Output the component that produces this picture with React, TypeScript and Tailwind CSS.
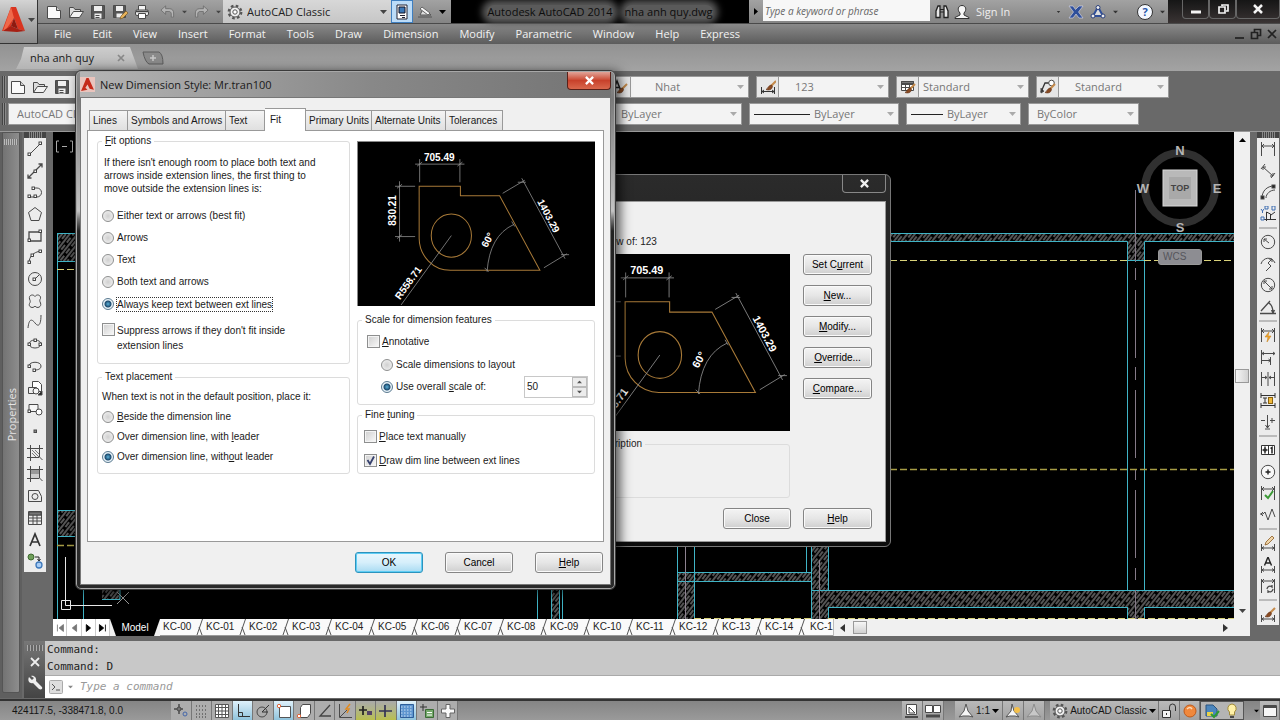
import React from "react";
import clsx from "clsx";

type Children = { children?: React.ReactNode };

const UI_FONT = "font-['Liberation_Sans',sans-serif] text-[10px]";

function Icon({ children, size = "h-4 w-4" }: Children & { size?: string }) {
  return (
    <svg viewBox="0 0 16 16" className={clsx("shrink-0", size)} fill="none" stroke="#4a4a4a" strokeWidth="1">
      {children}
    </svg>
  );
}

function Caret({ className = "text-[#444]" }: { className?: string }) {
  return (
    <svg viewBox="0 0 7 4" className={clsx("h-1 w-[7px] shrink-0", className)} fill="currentColor">
      <path d="M0 0h7L3.5 4z" />
    </svg>
  );
}

/* ---------- icon drawings ---------- */

const NewIcon = () => (
  <Icon>
    <path d="M1.5 2.5h9l4 4v8h-13z" fill="#fafafa" />
    <path d="M10.5 2.5v4h4" fill="#ccc" />
  </Icon>
);
const OpenIcon = () => (
  <Icon>
    <path d="M1.5 13.5v-10h4l1.5 2h5.5v2.5" fill="#ddd" />
    <path d="M1.5 13.5l4-6h10l-4 6z" fill="#f2f2f2" />
  </Icon>
);
const SaveIcon = () => (
  <Icon>
    <path d="M1.5 1.5h13v13h-13z" fill="#555" />
    <path d="M4 2h8v5H4zM4.5 9.5h7v5h-7z" fill="#eee" stroke="none" />
    <path d="M5.5 11.5h4M5.5 13.5h4" />
  </Icon>
);
const SaveAsIcon = () => (
  <Icon>
    <path d="M1.5 1.5h12v12h-12z" fill="#555" />
    <path d="M4 2h7v5H4zM4.5 9.5h6v4h-6z" fill="#eee" stroke="none" />
    <path d="M8 15l1-3 5-5 2 2-5 5z" fill="#e6b25a" stroke="#6b4d1d" strokeWidth=".6" />
  </Icon>
);
const PrintIcon = () => (
  <Icon>
    <path d="M4.5 6V1.5h7V6" fill="#f4f4f4" />
    <rect x="1.5" y="6" width="13" height="5.5" rx="1.5" fill="#eee" />
    <path d="M4.5 9.5h7v5h-7z" fill="#fff" />
    <path d="M2 7.500h12" stroke="#444" strokeWidth="1.5" />
  </Icon>
);
const UndoIcon = ({ flip }: { flip?: boolean }) => (
  <svg viewBox="0 0 16 16" className={clsx("h-[15px] w-[15px]", flip && "-scale-x-100")} fill="#b4b4b4" stroke="#6c6c6c" strokeWidth=".9">
    <path d="M1 6.500l5-4.500v3h4c3 0 4.500 2 4.500 4.500V14h-2.500v-3.500c0-1.500-1-2.500-2.500-2.500H6v3z" />
  </svg>
);
const GearIcon = () => (
  <Icon>
    <circle cx="8" cy="8" r="6.300" fill="none" stroke="#555" strokeWidth="2.200" strokeDasharray="2.600 2.350" />
    <circle cx="8" cy="8" r="5" fill="#f2f2f2" stroke="#555" />
    <circle cx="8" cy="8" r="2.200" fill="#fff" stroke="#555" />
  </Icon>
);
const PlotIcon = () => (
  <Icon>
    <path d="M3 1h10v14H3z" fill="#fff" stroke="#223" />
    <path d="M5 3h6v6H5z" fill="#3b78b8" stroke="#112" />
    <path d="M6 11.500h5M8 13.500h3" stroke="#223" />
  </Icon>
);
const SketchIcon = () => (
  <Icon>
    <path d="M1 13h14M3 11l3-6 8 6z" fill="#ddd" stroke="#555" />
    <path d="M5 3l8 6-2 2-8-6z" fill="#f4f4f4" stroke="#666" />
  </Icon>
);
const BrushTail = () => (
  <>
    <path d="M15 5l-5 5" stroke="#c48a4a" strokeWidth="2" />
    <path d="M10.500 9c-3 0-3 3-5.500 4.500 2.500 1 6 .5 6.500-3z" fill="#8a4a22" stroke="#5a2d12" strokeWidth=".6" />
  </>
);
const TextStyleIcon = () => (
  <Icon>
    <path d="M1 12L5 2l4 10M2.500 8.500h5" stroke="#222" strokeWidth="1.500" />
    <BrushTail />
  </Icon>
);
const DimStyleIcon = () => (
  <Icon>
    <path d="M1.500 8v7M14.500 8v7M2 12.500h12M4 11l-2 1.500L4 14M12 11l2 1.500-2 1.500" stroke="#333" />
    <g transform="translate(1 -3)">
      <BrushTail />
    </g>
  </Icon>
);
const TableStyleIcon = () => (
  <Icon>
    <path d="M1.500 2.500h12v9h-12zM1.500 5.500h12M5.500 2.500v9M9.500 2.500v9M1.500 8.500h12" fill="#fff" />
    <path d="M1.500 2.500h12v2h-12z" fill="#777" />
    <BrushTail />
  </Icon>
);
const LeaderStyleIcon = () => (
  <Icon>
    <path d="M1 13l4-9h4" stroke="#333" strokeWidth="1.300" />
    <path d="M1 9v5l3-2" fill="#333" />
    <circle cx="11.500" cy="4" r="2.800" fill="#fff" />
    <BrushTail />
  </Icon>
);

const Node = ({ x, y }: { x: number; y: number }) => (
  <rect x={x - 1} y={y - 1} width="2.500" height="2.500" fill="#fff" stroke="#333" strokeWidth=".9" />
);

const drawTools: [string, React.ReactNode][] = [
  ["Line", <><path d="M2 14L14 2" /><Node x={2} y={13} /><Node x={13} y={2} /></>],
  ["Construction line", <><path d="M1 15L15 1M1 11.500V15h3.500M11.500 1H15v3.500" strokeWidth="1.300" /><Node x={8} y={8} /></>],
  ["Polyline", <><path d="M2 13h8a4 4 0 0 0 0-9H7" /><Node x={2} y={12} /><Node x={8} y={12} /><Node x={6} y={4} /></>],
  ["Polygon", <path d="M8 1.500l6.500 5-2.500 8H4l-2.500-8z" />],
  ["Rectangle", <><path d="M2 4h12v9H2z" strokeWidth="1.300" /><Node x={2} y={12} /><Node x={13} y={3} /></>],
  ["Arc", <><path d="M2 14C2 8 6 3 14 2" /><Node x={2} y={13} /><Node x={5} y={6} /><Node x={13} y={2} /></>],
  ["Circle", <><circle cx="8" cy="8" r="6.500" /><path d="M8 8l4-4" /><Node x={7} y={8} /></>],
  ["Revision cloud", <path d="M8 3.500C9.500 1 14 1.500 13.500 5.500 12.500 7 12.500 8 13.500 10 15 14 10 16 8 13 6 16 1 14 2.500 10.500 3.500 9 3.500 8 2.500 6 1.500 1.500 6.500 1 8 3.500z" />],
  ["Spline", <path d="M1 14C2 4 5 5 8 9s6 3 6-8" />],
  ["Ellipse", <><ellipse cx="8" cy="8" rx="6" ry="4" /><Node x={2} y={8} /><Node x={13} y={8} /><Node x={8} y={4} /></>],
  ["Ellipse arc", <><path d="M2 8c0-5 12-5 12 0 0 3-3 4-6 4" /><Node x={7} y={12} /><Node x={2} y={8} /></>],
  ["Insert block", <><path d="M5.500 1.500h6l3 3v7h-9z" fill="#fff" /><path d="M1.500 7.500h8v6h-8z" fill="#eee" /><circle cx="9" cy="11" r="3" fill="#f6f6f6" /><path d="M15 11v4h-4z" fill="#222" /></>],
  ["Make block", <><path d="M2 3.500h9v7H2z" fill="#f6f6f6" /><circle cx="12" cy="11" r="3" fill="#fff" /><Node x={2} y={10} /></>],
  ["Point", <rect x="7" y="7" width="2.500" height="2.500" fill="#888" />],
  ["Hatch", <><path d="M3.500 0v16M12.500 0v12l3 3M0 3.500h16M0 12.500h12" /><path d="M5 5l7 7M8 5l4 4M5 8l4 4" strokeWidth=".7" /></>],
  ["Gradient", <><path d="M4 4h8v4H4z" fill="#999" stroke="none" /><path d="M4 8h8v4H4z" fill="#ccc" stroke="none" /><path d="M3.500 0v16M12.500 0v12l3 3M0 3.500h16M0 12.500h12" /></>],
  ["Region", <><path d="M1.500 2.500h10l3 6v5h-13z" /><circle cx="8" cy="8.500" r="3" /></>],
  ["Table", <><path d="M1.500 1.500h13v13h-13zM1.500 5h13M1.500 8h13M1.500 11h13M6 5v10M10 5v10" /><path d="M2 2h12v3H2z" fill="#777" /></>],
  ["Multiline text", <path d="M3 14L8 2l5 12M4.500 10h7" stroke="#333" strokeWidth="1.700" />],
  ["Add selected", <><circle cx="4" cy="4" r="3" fill="#6f9f5a" stroke="#3e6a30" /><circle cx="12" cy="12" r="3" fill="#a9cdf5" stroke="#3d78bb" strokeWidth="1.300" /><path d="M8 4h4v3M10.500 6l1.500 2 1.500-2" stroke="#222" /></>],
];

const DimBase = ({ y = 5 }: { y?: number }) => (
  <path d={`M1.500 1v14M14.500 1v14M2 ${y}h12M4 ${y - 2}l-2 2 2 2M12 ${y - 2}l2 2-2 2`} />
);
const DimFoot = () => <path d="M1.500 9v7M14.500 9v7M2 13h12M4 11.500L2 13l2 1.500M12 11.500l2 1.500-2 1.500" />;

const dimTools: ([string, React.ReactNode] | null)[] = [
  ["Linear", <DimBase />],
  ["Aligned", <path d="M3 4l10 9M1 6l4-5M11 15l4-5M3 7V4h3M10 13h3v-3" />],
  ["Arc length", <><path d="M2 14C2 7 7 2 14 2M6 14c0-4 4-8 9-8" /><rect x="1" y="12" width="3" height="3" fill="#222" /><rect x="12" y="1" width="3" height="3" fill="#222" /></>],
  ["Ordinate", <><path d="M6.500 6v9M4 13.500h12M6.500 6l4 2v5M11 9l4-3" stroke="#333" /><path d="M1 3l1.500 2L4 3M2.500 5v2M1 11h3v3H1zM5 0h3v3H5zM12 0h3v4h-3z" stroke="#3c6cb0" /></>],
  null,
  ["Radius", <><circle cx="8" cy="8" r="6.700" fill="#ededed" /><path d="M9 9L4 5M4 8V5h3" /></>],
  ["Jogged", <path d="M1 8C3 1 12 0 15 7M12 3L8 7l3 3-5 5M9 3h3v3" />],
  ["Diameter", <><circle cx="8" cy="8" r="6.700" fill="#ededed" /><path d="M4 4l8 8M4 7V4h3M9 12h3V9" /></>],
  ["Angular", <path d="M0 14.500h16M1 12L10 2M9 4c3 2 4 5 4 10M11.500 11l1.500 3 1.500-3" strokeWidth="1.300" />],
  null,
  ["Quick dimension", <><DimBase y={4} /><path d="M9 5L5 10h3l-1 5 4-6H8z" fill="#f0a830" stroke="#c47a10" strokeWidth=".5" /></>],
  ["Baseline", <path d="M1.500 1v14M2 4.500h13M13 3l2 1.500L13 6M2 11.500h8M8.500 10l2 1.500-2 1.500M10.500 8v8M4 3L2 4.500 4 6" />],
  ["Continue", <path d="M1.500 1v14M8 1v14M14.500 1v14M2 6.500h5M9 6.500h5M5 5l2 1.500L5 8M11 5L9 6.500 11 8" />],
  ["Dimension space", <><path d="M1 1v5M15 1v5M1 3.500h14M1 11v5M15 11v5M1 13.500h14M5 6v5M3 6h4M3 11h4" stroke="#333" /><rect x="8.500" y="5.500" width="4" height="6" fill="#f0b93a" stroke="#8a6210" /></>],
  ["Dimension break", <path d="M7.500 1v13M5 15h5M5.500 11l2 3 2-3M1 6.500h4M10 6.500h5M12 4v5" />],
  null,
  ["Tolerance", <><path d="M1.500 3.500h13v9h-13zM8.500 3.500v9" fill="#fff" stroke="#333" /><path d="M5 4.500v7M2.500 8h5" stroke="#222" strokeWidth="1.400" /><circle cx="5" cy="8" r="1.500" fill="#222" /><path d="M10.500 6.500l1.500-1v6" stroke="#222" strokeWidth="1.500" /></>],
  ["Center mark", <><circle cx="8" cy="8" r="6.700" fill="#f8f8f8" /><path d="M8 5.500v5M5.500 8h5" stroke="#222" strokeWidth="1.400" /></>],
  ["Inspection", <><DimBase y={4} /><path d="M5 10l3 3 5-7" stroke="#3c9a36" strokeWidth="2" /></>],
  ["Jogged linear", <path d="M0 7h3l2-2 3 8 4-11 3 8M3 5L1 7l2 2" />],
  null,
  ["Dimension edit", <><DimFoot /><path d="M5 10l1-3 6-6 2 2-6 6z" fill="#f0d5a8" stroke="#8a5a22" strokeWidth=".8" /></>],
  ["Dimension text edit", <><DimFoot /><path d="M4.500 8.500L8 0l3.500 8.500M5.500 6h5" stroke="#222" strokeWidth="1.400" /></>],
  ["Dimension update", <><DimBase y={3} /><path d="M7 11a3 3 0 0 1 5-2v-2M13 11a3 3 0 0 1-5 2v2" strokeWidth="1.300" /></>],
  null,
  ["Dimension style", <><DimFoot /><g transform="translate(0 -3)"><BrushTail /></g></>],
];

const statusTools: [string, React.ReactNode, string?][] = [
  ["Infer constraints", <><path d="M1 6h9M6 1v10" strokeWidth="1.500" /><circle cx="6" cy="6" r="2" fill="#777" /><circle cx="12" cy="11" r="2" stroke="#46a" /></>],
  ["Snap mode", <path d="M2 3h12M2 7h12M2 11h12M2 14h12" strokeDasharray="1 2" stroke="#333" />],
  ["Grid display", <path d="M1.500 1.500h13v13h-13zM4.500 1v14M8 1v14M11.500 1v14M1 4.500h14M1 8h14M1 11.500h14" fill="#fff" stroke="#555" />],
  ["Ortho mode", <path d="M3.500 1v12.500H15M3.500 9.500h4v4" stroke="#333" />, "on"],
  ["Polar tracking", <><circle cx="7" cy="9" r="5" /><path d="M7 9l7-7M7 9h6" stroke="#333" /></>],
  ["Object snap", <><path d="M3.500 3.500h11v11h-11z" fill="#fff" stroke="#555" /><circle cx="3" cy="3" r="1.700" stroke="#e0663a" fill="#fff" /></>, "on"],
  ["3D object snap", <><path d="M4.500 4.500l2-3h8v9l-3 4h-7z" fill="#fff" /><circle cx="3" cy="13" r="1.700" stroke="#e0663a" fill="#fff" /></>],
  ["Object snap tracking", <path d="M13 2L3 13h11" stroke="#444" strokeWidth="1.300" />],
  ["Dynamic UCS", <><path d="M2.500 1v13.500H15M3 14L10 7" /><path d="M13 1l-4 5h3l-2 4" stroke="#e08a20" strokeWidth="1.500" /></>],
  ["Dynamic input", <><path d="M1 7h8M5 3v9" stroke="#222" strokeWidth="1.700" /><rect x="9" y="8" width="5" height="4" fill="#546" stroke="none" /></>, "lime"],
  ["Lineweight", <path d="M1 8h13M7 2v12" stroke="#335" strokeWidth="1.700" />, "lime"],
  ["Transparency", <><path d="M1.500 1.500h13v13h-13z" fill="#5d95cf" stroke="#2d5d99" /><path d="M2 4h12M2 7h12M2 10h12M2 13h12" stroke="#cfe2f5" strokeDasharray="1.500 1.500" /></>, "on"],
  ["Quick properties", <><path d="M1 4h7M4 1v7" stroke="#333" /><path d="M6.500 6.500h8v8h-8z" fill="#74a86a" stroke="#3b6b35" /><path d="M8 9.500h5M8 12h5" stroke="#fff" /></>],
  ["Selection cycling", <path d="M6 1.500h4V6h4.500v4H10v4.500H6V10H1.500V6H6z" fill="#fafafa" stroke="#666" />],
];

const layoutTabs = [
  "KC-00", "KC-01", "KC-02", "KC-03", "KC-04", "KC-05", "KC-06", "KC-07",
  "KC-08", "KC-09", "KC-10", "KC-11", "KC-12", "KC-13", "KC-14",
];
const menus = [
  "File", "Edit", "View", "Insert", "Format", "Tools", "Draw", "Dimension",
  "Modify", "Parametric", "Window", "Help", "Express",
];

/* ---------- top bars ---------- */

function AppButton() {
  return (
    <button aria-label="Application menu" className="flex w-[38px] shrink-0 items-center justify-center gap-0.5 border-r border-b border-[#333] bg-linear-to-b from-[#d4d4d4] to-[#8a8a8a] pb-1">
      <svg viewBox="0 0 24 28" className="h-7 w-6">
        <path d="M9 1h5l9 24-7-2-4-11-3 8 4 4-13 1z" fill="#d9341f" />
        <path d="M9 1l3 11-7 10-4 3z" fill="#f0684a" />
        <path d="M12 12l4 11-7-3z" fill="#8e1a10" />
        <path d="M1 25l8-5 7 3 7 2-8 1z" fill="#a62014" />
      </svg>
      <Caret />
    </button>
  );
}

function TitleBar() {
  return (
    <div className="flex h-6 items-stretch border-b border-[#4a4a4a] bg-linear-to-b from-[#a2a2a2] to-[#848484]">
      <div className="flex w-[185px] items-center gap-[6px] pl-2">
        <button aria-label="New"><NewIcon /></button>
        <button aria-label="Open"><OpenIcon /></button>
        <button aria-label="Save"><SaveIcon /></button>
        <button aria-label="Save as"><SaveAsIcon /></button>
        <button aria-label="Plot"><PrintIcon /></button>
        <button aria-label="Undo" className="ml-1"><UndoIcon /></button>
        <Caret className="scale-75 text-[#444]" />
        <button aria-label="Redo"><UndoIcon flip /></button>
        <Caret className="scale-75 text-[#444]" />
      </div>
      <label className="flex w-[168px] items-center gap-1 bg-linear-to-b from-[#d8d8d8] to-[#c6c6c6] px-1 text-[#222]">
        <GearIcon />
        <select aria-label="Workspace" className="w-0 flex-1 appearance-none bg-transparent outline-none">
          <option>AutoCAD Classic</option>
        </select>
        <Caret />
      </label>
      <button aria-label="Plot preview" className="flex w-[22px] items-center justify-center border border-[#3f7fc0] bg-[#bcdcf8]">
        <PlotIcon />
      </button>
      <button aria-label="Sketch" className="ml-1 flex items-center"><SketchIcon /></button>
      <div className="flex w-[18px] items-center justify-center"><Caret className="text-black" /></div>
      <div className="flex flex-1 items-center justify-center gap-3 bg-black text-[#0d0d0d]">
        <span className="rounded-full bg-[#5a5a5a] leading-[14px] shadow-[0_0_7px_5px_#5a5a5a]">Autodesk AutoCAD 2014</span>
        <span className="rounded-full bg-[#5a5a5a] leading-[14px] shadow-[0_0_7px_5px_#5a5a5a]">nha anh quy.dwg</span>
      </div>
      <div className="flex w-[14px] items-center justify-center">
        <svg viewBox="0 0 4 7" className="h-[7px] w-1"><path d="M0 0v7l4-3.500z" /></svg>
      </div>
      <input aria-label="Search" placeholder="Type a keyword or phrase" className="mb-0.5 w-[167px] bg-[#f7f7f7] px-0.5 text-[10px] italic outline-none placeholder:text-[#666]" />
      <div className="flex w-[238px] items-center pl-1">
        <Icon>
          <path d="M2 13.500V7l2-5h2v11.500zM10 13.500V2h2l2 5v6.500z" fill="#e8e8e8" stroke="#222" strokeWidth="1.300" />
          <path d="M6 5.500h4M6 8h4" stroke="#222" />
        </Icon>
        <button className="ml-1 flex items-center gap-1.5 text-[#eee]">
          <Icon>
            <path d="M1 14.500h14v-1l-5-2.500V9c3-3 2-7.500-2-7.500S3 6 6 9v2l-5 2.500z" fill="#f6f6f6" stroke="#333" />
          </Icon>
          Sign In
        </button>
        <div className="ml-auto flex items-center gap-[6px] pr-0.5">
          <Caret className="scale-50 text-[#333]" />
          <Icon><path d="M1 2h4l2.500 3.500L11 2h4l-4.500 6L15 14h-4l-3-4-3 4H1l4.500-6z" fill="#2f4f9a" stroke="#dde" strokeWidth=".6" /></Icon>
          <Icon>
            <path d="M8 3l5 9H3z" stroke="#2f4f9a" strokeWidth="2" fill="#ddd" />
            <circle cx="8" cy="3.500" r="2" fill="#eee" stroke="#2a3f7a" /><circle cx="3" cy="12" r="2" fill="#eee" stroke="#2a3f7a" /><circle cx="13" cy="12" r="2" fill="#eee" stroke="#2a3f7a" />
          </Icon>
          <Caret className="scale-75 text-[#333]" />
          <button aria-label="Help" className="ml-3 h-4 w-4 rounded-full border border-[#333] bg-[#f4f8ff] text-[11px] leading-[14px] font-bold text-[#2555a8]">?</button>
          <Caret className="scale-75 text-[#333]" />
        </div>
      </div>
      <div className="flex w-[112px] justify-end bg-linear-to-b from-[#161616] to-[#3a3434]">
        {["Minimize", "Restore", "Close"].map((name, i) => (
          <button key={name} aria-label={name} className={clsx("flex h-[19px] items-center justify-center rounded-b-[4px] border border-t-0 border-[#666]", i === 2 ? "w-11" : "w-[27px]")}>
            <svg viewBox="0 0 12 12" className="h-3 w-3" fill="none" stroke="#f4f4f4" strokeWidth="2">
              {i === 0 && <path d="M1 9h10" strokeWidth="3" />}
              {i === 1 && <path d="M2 4h6v6H2zM5 3V2h6v6H9" strokeWidth="1.700" />}
              {i === 2 && <path d="M2 2l8 8M10 2l-8 8" strokeWidth="2.500" />}
            </svg>
          </button>
        ))}
      </div>
    </div>
  );
}

function MenuBar() {
  return (
    <nav className="flex h-5 items-center gap-[21px] bg-linear-to-b from-[#8a8a8a] to-[#5c5c5c] pl-4 text-[#f2f2f2]">
      {menus.map((m) => (
        <button key={m}>{m}</button>
      ))}
      <div className="ml-auto flex items-center gap-1 pr-0.5">
        {["M1 10h9", "M1.500 4.500h6v6h-6zM4.500 4V1.500h6v6H8", "M2 2l8 8M10 2l-8 8"].map((d) => (
          <button key={d} aria-label="Drawing window">
            <svg viewBox="0 0 12 12" className="h-3 w-3" fill="none" stroke="#222" strokeWidth="1.700"><path d={d} /></svg>
          </button>
        ))}
      </div>
    </nav>
  );
}

function FileTabs() {
  return (
    <div className="flex h-[27px] items-end bg-linear-to-b from-[#929292] to-[#a3a3a3] pb-0.5 pl-4">
      <button className="flex h-[22px] w-[122px] items-center justify-between bg-linear-to-b from-[#cdcdcd] to-[#b4b4b4] pr-[13px] pl-[14px] text-[#1a1a1a] [clip-path:polygon(8px_0,114px_0,122px_22px,0_22px,5px_12px)]">
        nha anh quy
        <svg viewBox="0 0 8 8" className="h-2 w-2" stroke="#888" strokeWidth="1.700"><path d="M1 1l6 6M7 1L1 7" /></svg>
      </button>
      <button aria-label="New tab" className="ml-1 pb-1">
        <svg viewBox="0 0 22 14" className="h-[14px] w-[22px]">
          <path d="M1 1h16q4 2 4 12H7Q3 11 1 1z" fill="#8a8a8a" stroke="#5c5c5c" />
          <path d="M11 4v6M8 7h6" stroke="#c8c8c8" strokeWidth="1.500" />
        </svg>
      </button>
    </div>
  );
}

function Grip() {
  return <div className="mx-0.5 w-1 shrink-0 self-stretch bg-[repeating-linear-gradient(90deg,#444_0_1px,#8a8a8a_1px_2px)]" />;
}

function Combo({ label, value, className, line, children }: Children & { label: string; value: string; className: string; line?: string }) {
  return (
    <div className="flex h-[22px] shrink-0 items-stretch border border-[#999] bg-[#f3f3f3]">
      {children && <div className="flex w-[22px] items-center justify-center border-r border-[#999] bg-[#e6e6e6]">{children}</div>}
      <label className={clsx("flex items-center gap-1 pr-1 text-[#777]", className)}>
        {line && (
          <svg className={clsx("h-px shrink-0", line)}><rect width="100%" height="1" fill="#222" /></svg>
        )}
        <select aria-label={label} className="w-0 flex-1 appearance-none bg-transparent outline-none">
          <option>{value}</option>
        </select>
        <Caret className="text-[#aaa]" />
      </label>
    </div>
  );
}

function Toolbars() {
  return (
    <div className="flex flex-col gap-[5px] border-b border-[#999] bg-[#696969] pt-[5px] pb-1.5">
      <div className="flex gap-[7px]">
        <div className="flex w-[601px]">
          <Grip />
          <div className="flex flex-1 items-center gap-[6px] bg-[#e9e9e9] px-0.5">
            <button aria-label="New"><NewIcon /></button>
            <button aria-label="Open"><OpenIcon /></button>
            <button aria-label="Save"><SaveIcon /></button>
          </div>
        </div>
        <Combo label="Text style" value="Nhat" className="w-[117px] pl-6"><TextStyleIcon /></Combo>
        <Combo label="Dimension style" value="123" className="w-[109px] pl-4"><DimStyleIcon /></Combo>
        <Combo label="Table style" value="Standard" className="w-[109px] pl-1"><TableStyleIcon /></Combo>
        <Combo label="Multileader style" value="Standard" className="w-[109px] pl-4"><LeaderStyleIcon /></Combo>
      </div>
      <div className="flex gap-[7px]">
        <div className="flex w-[583px]">
          <Grip />
          <Combo label="Workspace" value="AutoCAD Classic" className="w-[140px] pl-2" />
        </div>
        <Combo label="Color" value="ByLayer" className="w-[150px] pl-[30px]" />
        <Combo label="Linetype" value="ByLayer" className="w-[148px] pl-1" line="w-14" />
        <Combo label="Lineweight" value="ByLayer" className="w-[113px] pl-1" line="w-8" />
        <Combo label="Plot style" value="ByColor" className="w-[109px] pl-2" />
      </div>
    </div>
  );
}

/* ---------- side toolbars ---------- */

function ToolColumn({ items, className }: { items: ([string, React.ReactNode] | null)[]; className: string }) {
  return (
    <div className={clsx("flex w-[22px] shrink-0 flex-col self-start bg-[#ececec]", className)}>
      <div className="h-[6px] shrink-0 border-x-4 border-[#444] bg-[repeating-linear-gradient(90deg,#444_0_1px,#888_1px_2px)]" />
      {items.map((tool, i) =>
        tool ? (
          <button key={tool[0]} aria-label={tool[0]} className="flex min-h-0 flex-1 items-center justify-center">
            <Icon>{tool[1]}</Icon>
          </button>
        ) : (
          <hr key={i} className="mx-0.5 my-[2px] border-t-2 border-[#bbb]" />
        )
      )}
    </div>
  );
}

function PropertiesPalette() {
  return (
    <div className="flex w-[22px] shrink-0 flex-col bg-[#5f5f5f] px-0.5 pb-[5px]">
      <div className="relative flex flex-1 flex-col items-center rounded-b-[2px] border border-[#555] bg-linear-to-r from-[#737373] to-[#8d8d8d]">
        <div className="mt-1.5 h-1.5 w-3.5 bg-[repeating-linear-gradient(90deg,#bbb_0_1px,#777_1px_2px)]" />
        <span className="mt-[243px] rotate-180 text-[11px] leading-none text-[#e4e4e4] [writing-mode:vertical-rl]">Properties</span>
      </div>
    </div>
  );
}

/* ---------- model space ---------- */

function FloorPlan() {
  return (
    <svg className="absolute inset-0 h-full w-full" fill="none" strokeWidth="1">
      <defs>
        <pattern id="hatch" width="6" height="9" patternUnits="userSpaceOnUse" patternTransform="rotate(38)">
          <path d="M1 0v9M4 0v6" stroke="#8c8c8c" strokeWidth="1.200" />
        </pattern>
      </defs>
      {/* origin moved to the window's top left */}
      <g transform="translate(-53 -132)">
        <g fill="url(#hatch)">
          <path d="M57 233h20v28H57zM57 510h20v26H57zM102 588h18v11h-18zM551 588h8v32h-8z" />
          <path d="M880 233h2000v8H1144v19h-16v-19H880zM677 572h134v9H694v39h-17z" />
          <path d="M811 540h17v50h2000v17H1144v13h-16v-13H828v13h-17z" />
        </g>
        <g stroke="#3fb4c6">
          <path d="M57.500 233v387M57 233.500h20M57 261.500h20M57 510.500h20M57 536.500h20M83.500 588v32M102 599.500h18v-11" />
          <path d="M537.500 588v32M551.500 588v32M559.500 588v32M562.500 588v32" />
          <path d="M677.500 540v80M694.500 540v80M677 572.500h134M677 581.500h134M806.500 540v32M811.500 540v80M828.500 540v50M828.500 607v13" />
          <path d="M811 590.500h2000M828 607.500h299M1144 607.500h2000" />
          <path d="M880 233.500h2000M880 241.500h247.500V590M1144.500 590V241.500h2000M1127 260.500h17M1127.500 607v13M1144.500 607v13" />
        </g>
        <g stroke="#d9d27a" strokeDasharray="7 3">
          <path d="M57 269.500h20M880 260.500h247M1144 260.500h2000M694 618.500h117M828 618.500h2000" />
          <path d="M57 545.500h20M880 469.500h2000" stroke="#a69c45" strokeWidth="1.500" />
        </g>
        <path d="M685.500 540v80M819.500 560v60" stroke="#8d8290" />
        <path d="M1135.500 190v72M1135.500 268v12M1135.500 290v68M1135.500 367v13M1135.500 390v68M1135.500 470v10M1135.500 490v68M1135.500 568v12M1135.500 590v30" stroke="#857a88" />
        <g stroke="#e8e8e8">
          <path d="M65.500 557v48.500H112M61.500 600.500h9v9h-9z" />
          <path d="M117 592l12 12M129 592l-12 12" stroke="#999" />
          <path d="M59 141h-2.500v11H59M62 146.500h5M70 141h2.500v11H70" stroke="#aaa" />
        </g>
      </g>
    </svg>
  );
}

function ViewCube() {
  return (
    <div className="absolute top-[9px] right-[10px] flex flex-col items-center">
      <svg viewBox="0 0 88 94" className="h-[94px] w-[88px] font-['Liberation_Sans',sans-serif] font-bold" textAnchor="middle">
        <circle cx="44" cy="47" r="35" fill="none" stroke="#303030" strokeWidth="8" />
        <g fill="#b4b4b4" fontSize="13">
          <text x="44" y="14">N</text>
          <text x="44" y="91">S</text>
          <text x="7" y="52">W</text>
          <text x="81" y="52">E</text>
        </g>
        <rect x="27" y="29" width="34" height="36" fill="#b9b9b9" stroke="#d8d8d8" />
        <rect x="33" y="36" width="22" height="22" fill="#a9a9a9" />
        <text x="44" y="50" fontSize="9" fill="#444">TOP</text>
      </svg>
      <button className="mt-[14px] h-4 w-11 rounded-[3px] border border-[#999] bg-[#8d8d92] pl-1 text-left font-['Liberation_Sans',sans-serif] text-[10px] leading-[14px] text-[#55555c]">WCS</button>
    </div>
  );
}

function LayoutTabs() {
  return (
    <div className={clsx("flex h-[17px] shrink-0 bg-[#f0f0f0] text-[#222]", UI_FONT)}>
      <div className="flex w-[57px] bg-white">
        {["M4 3v8M11 3L6 7l5 4z", "M10 3L5 7l5 4z", "M5 3l5 4-5 4z", "M4 3l5 4-5 4zM11 3v8"].map((d, i) => (
          <button key={d} aria-label="Scroll tabs" className="flex flex-1 items-center justify-center border-r border-[#ccc]">
            <svg viewBox="0 0 14 14" className={clsx("h-3 w-3 fill-current stroke-current", i < 2 ? "text-[#777]" : "text-black")}><path d={d} /></svg>
          </button>
        ))}
      </div>
      <button className="w-[50px] bg-black text-center leading-[17px] text-white [clip-path:polygon(0_0,50px_0,44px_100%,6px_100%)]">Model</button>
      {layoutTabs.map((tab) => (
        <button key={tab} className="flex w-[43px] shrink-0 items-center justify-between border-b border-[#999] bg-[#fafafa] pl-[3px] leading-4">
          {tab}
          <svg viewBox="0 0 7 16" className="h-4 w-[7px]"><path d="M6.500 0L1 16M3 8l3 8" stroke="#555" fill="none" /></svg>
        </button>
      ))}
      <button className="w-[28px] border-b border-[#999] bg-[#fafafa] pl-[5px] text-left leading-4">KC-1</button>
      <div className="flex flex-1 items-center border-l border-[#bbb] pl-1.5">
        <svg viewBox="0 0 5 8" className="h-2 w-[5px]"><path d="M5 0v8L0 4z" fill="#333" /></svg>
        <div className="ml-2 h-[13px] w-[14px] border border-[#999] bg-linear-to-b from-[#f6f6f6] to-[#d2d2d2]" />
        <svg viewBox="0 0 5 8" className="mr-[22px] ml-auto h-2 w-[5px]"><path d="M0 0v8l5-4z" fill="#333" /></svg>
      </div>
    </div>
  );
}

function ModelSpace() {
  return (
    <div className="flex min-w-0 flex-1 flex-col">
      <div className="flex min-h-0 flex-1">
        <div className="relative min-w-0 flex-1 overflow-hidden bg-black">
          <FloorPlan />
          <ViewCube />
        </div>
        <div className="flex w-4 shrink-0 flex-col items-center justify-between bg-[#f0f0f0] py-1.5">
          <Caret className="rotate-180" />
          <div className="h-[14px] w-[14px] border border-[#999] bg-linear-to-r from-[#f6f6f6] to-[#d2d2d2]" />
          <Caret />
        </div>
      </div>
      <LayoutTabs />
    </div>
  );
}

/* ---------- bottom ---------- */

function CommandWindow() {
  return (
    <div className="mt-[5px] flex h-[57px] shrink-0 font-['DejaVu_Sans_Mono','Liberation_Mono',monospace] text-[11px]">
      <div className="flex w-[21px] flex-col items-center bg-linear-to-b from-[#777] to-[#444] pt-1">
        <div className="h-1.5 w-4 bg-[repeating-linear-gradient(90deg,#aaa_0_1px,#666_1px_3px)]" />
        <button aria-label="Close command line" className="mt-1.5">
          <svg viewBox="0 0 10 10" className="h-[10px] w-[10px]" stroke="#eee" strokeWidth="1.800"><path d="M1 1l8 8M9 1L1 9" /></svg>
        </button>
        <button aria-label="Customize" className="mt-2">
          <svg viewBox="0 0 16 16" className="h-4 w-4"><path d="M2 2l3 3 2-2-3-2c3-1 6 2 5 5l6 6c1 2-1 3-3 2L6 8C3 9 0 6 2 2z" fill="#eee" /></svg>
        </button>
      </div>
      <div className="flex flex-1 flex-col">
        <div className="flex flex-1 flex-col justify-evenly border-b border-[#aaa] bg-[#c8c8c8] pl-0.5 text-[#222]">
          <p className="leading-[15px]">Command:</p>
          <p className="leading-[15px]">Command: D</p>
        </div>
        <label className="flex h-[22px] items-center gap-1 bg-white pl-1">
          <svg viewBox="0 0 14 14" className="h-[14px] w-[14px]">
            <rect x=".5" y=".5" width="13" height="13" rx="1" fill="#ddd" stroke="#aaa" />
            <path d="M3 4l3 3-3 3M7 10h4" stroke="#555" fill="none" />
          </svg>
          <Caret className="scale-75 text-[#888]" />
          <input aria-label="Command" placeholder="Type a command" className="ml-[2px] flex-1 italic outline-none placeholder:text-[#999]" />
        </label>
      </div>
    </div>
  );
}

const statusCell = "flex items-center justify-center border-r border-[#777] bg-linear-to-b from-[#b9b9b9] to-[#a2a2a2]";

function StatusBar() {
  return (
    <footer className={clsx("flex h-[21px] shrink-0 items-stretch border-t-2 border-[#333] bg-linear-to-b from-[#858585] to-[#9a9a9a] text-[#151515]", UI_FONT)}>
      <div className="flex w-[171px] items-center pl-3">424117.5, -338471.8, 0.0</div>
      {statusTools.map(([name, icon, tone], i) => (
        <button
          key={name}
          aria-label={name}
          className={clsx(
            "flex items-center justify-center border-r border-[#777]",
            i % 2 ? "w-5" : "w-[21px]",
            !tone && "bg-[#adadad]",
            tone === "on" && "bg-linear-to-b from-[#dff1fb] to-[#8fc3dc]",
            tone === "lime" && "bg-linear-to-b from-[#aaa] to-[#b9bf4a]"
          )}
        >
          <Icon>{icon}</Icon>
        </button>
      ))}
      <div className="flex-1" />
      <button aria-label="Model" className={clsx(statusCell, "w-[21px]")}>
        <Icon><path d="M2.500 1.500h10v10h-10z" fill="#fff" /><path d="M5 4v6h6z" /><path d="M1 14h13" strokeWidth="2" /></Icon>
      </button>
      <button aria-label="Quick view" className={clsx(statusCell, "w-[21px]")}>
        <Icon><path d="M.5 2.500h7v7h-7zM8.500 2.500h7v7h-7z" fill="#fff" /><path d="M1 13h14" strokeWidth="3" /></Icon>
      </button>
      <button className={clsx(statusCell, "ml-[11px] w-12 gap-0.5")}>
        <Icon><path d="M8 1l2 7 5 6-4-1H5l-4 1 5-6z" fill="#f6f6f6" stroke="#555" /></Icon>
        1:1 <Caret className="text-black" />
      </button>
      <button aria-label="Annotation visibility" className={clsx(statusCell, "w-[21px]")}>
        <Icon><path d="M7 1l2 7 5 6-4-1H5l-4 1 5-6z" fill="#f6f6f6" stroke="#555" /><circle cx="12" cy="7" r="3" fill="#f5c04a" stroke="none" /></Icon>
      </button>
      <button aria-label="Auto scale" className={clsx(statusCell, "w-[21px]")}>
        <Icon><path d="M8 1l2 7 5 6-4-1H5l-4 1 5-6z" fill="#c8c8c8" stroke="#8c8c8c" /></Icon>
      </button>
      <button className={clsx(statusCell, "ml-[5px] w-[109px] gap-0.5")}>
        <GearIcon /> AutoCAD Classic <Caret className="text-black" />
      </button>
      <button aria-label="Lock" className={clsx(statusCell, "w-[21px]")}>
        <Icon><path d="M1.500 7.500h8v7h-8z" fill="#f4f4f4" stroke="#333" /><path d="M8.500 7V4a3 3 0 0 1 6 0v4M5.500 10v2" stroke="#333" /></Icon>
      </button>
      <button aria-label="Hardware acceleration" className={clsx(statusCell, "w-5")}>
        <Icon><circle cx="8" cy="8" r="6" fill="#f0883c" stroke="#c05a1a" /><path d="M5 6q3-3 5 0" stroke="#fbd9b8" strokeWidth="1.500" /></Icon>
      </button>
      <div className="flex w-[44px] items-center justify-center gap-1 border border-[#555] bg-[#b4b4b4]">
        <Icon><path d="M2 2h7l4 4v7H2z" fill="#4c86bd" stroke="#2a5580" /><path d="M3 9h6v4H3z" fill="#e8d24a" stroke="none" /><path d="M7 11l3 3 5-6" stroke="#2f9a36" strokeWidth="2" /></Icon>
        <Icon><path d="M8 1a4.500 4.500 0 0 1 2.500 8v3h-5V9A4.500 4.500 0 0 1 8 1z" fill="#fff1a8" stroke="#a08a3a" /><path d="M6 14h4" strokeWidth="2" /></Icon>
      </div>
      <div className="flex w-4 items-center justify-end"><Caret className="scale-75 text-black" /></div>
      <button aria-label="Clean screen" className={clsx(statusCell, "w-5")}>
        <Icon><path d="M1.500 2.500h13v11h-13z" fill="#f6f6f6" /><path d="M1 4h14" strokeWidth="2" /></Icon>
      </button>
    </footer>
  );
}

/* ---------- dialogs ---------- */

function PushButton({ children, primary, className }: Children & { primary?: boolean; className?: string }) {
  return (
    <button
      className={clsx(
        "h-[21px] rounded-[3px] border text-center leading-[19px] text-black",
        primary
          ? "border-[#2c93bd] bg-linear-to-b from-[#e9f7fd] via-[#d6effb] via-50% to-[#a8dbf2] shadow-[inset_0_0_0_1px_#5ecdf5]"
          : "border-[#858585] bg-linear-to-b from-[#f4f4f4] via-[#e6e6e6] via-50% to-[#cfcfcf] shadow-[inset_0_0_0_1px_#fafafa]",
        className ?? "w-[68px]"
      )}
    >
      {children}
    </button>
  );
}

function Radio({ name, checked, className, children }: Children & { name: string; checked?: boolean; className?: string }) {
  return (
    <label className={clsx("flex items-center gap-[3px]", className)}>
      <input
        type="radio"
        name={name}
        defaultChecked={checked}
        className="h-3 w-3 shrink-0 appearance-none rounded-full border border-[#8e8f8f] bg-[radial-gradient(circle,#d0d0d0,#f6f6f6)] checked:border-[#5a7a90] checked:bg-[radial-gradient(circle,#5ab0d8_0,#1c4a6e_3px,#e8f2f8_4px)]"
      />
      {children}
    </label>
  );
}

function Check({ checked, className, children }: Children & { checked?: boolean; className?: string }) {
  return (
    <label className={clsx("flex gap-[2px]", className)}>
      <span className="grid h-[13px] w-[13px] shrink-0">
        <input type="checkbox" defaultChecked={checked} className="peer col-start-1 row-start-1 h-[13px] w-[13px] appearance-none border border-[#8e8f8f] bg-linear-to-br from-[#cfcfcf] to-[#fafafa] shadow-[inset_0_0_0_1px_#f4f4f4]" />
        <svg viewBox="0 0 13 13" className="pointer-events-none invisible col-start-1 row-start-1 h-[13px] w-[13px] peer-checked:visible">
          <path d="M3.500 6l2.500 4 4-7.500" fill="none" stroke="#36416e" strokeWidth="1.800" />
        </svg>
      </span>
      <span>{children}</span>
    </label>
  );
}

function Group({ title, className, children }: Children & { title: React.ReactNode; className?: string }) {
  return (
    <fieldset className={clsx("min-w-0 rounded-[3px] border border-[#dcdcdc] px-1", className)}>
      <legend className="px-[3px] leading-[14px]">{title}</legend>
      {children}
    </fieldset>
  );
}

function DimPreview({ className }: { className: string }) {
  return (
    <svg viewBox="358 142 238 163" preserveAspectRatio="xMidYMid slice" fill="none" className={clsx("shrink-0 bg-black", className)}>
      <g stroke="#a87a38">
        <path d="M420 186h41v9.500h39L540 269.500H451A31 32 0 0 1 420 238z" />
        <ellipse cx="452" cy="235" rx="20" ry="21.500" />
      </g>
      <g stroke="#8c8c8c" strokeWidth=".8">
        <path d="M416 164h49M420.500 159v23M460.500 159v23M418 166l5-4M458 166l5-4" />
        <path d="M400.500 181v60M396 186h20M396 236h20M398 188l5-4M398 238l5-4" />
        <path d="M522 178l43 80M503 193l22-13M544 267l23-14M518 182h8M561 254h8" />
        <path d="M514 224Q490 235 487.500 271M452 235l-50 69M512 221l3 5M485 267l4 4" />
      </g>
      <g fill="#fff" textAnchor="middle" fontSize="10" fontWeight="bold" fontFamily="'Liberation Sans', sans-serif">
        <text x="440" y="160.500">705.49</text>
        <text transform="translate(397 210) rotate(-90)">830.21</text>
        <text transform="translate(545.500 217) rotate(62)">1403.29</text>
        <text transform="translate(491 241) rotate(-62)">60°</text>
        <text transform="translate(412 284) rotate(-54)">R558.71</text>
      </g>
    </svg>
  );
}

function StyleManagerDialog() {
  return (
    <section
      role="dialog"
      aria-label="Dimension Style Manager"
      className={clsx("absolute top-[174px] left-[560px] w-[331px] rounded-[6px] border border-[#777] bg-linear-to-b from-[#2b2b2b] to-[#0c0c0c] px-1 pb-1 text-[#222]", UI_FONT)}
    >
      <div className="flex h-[26px] justify-end">
        <button aria-label="Close" className="flex h-[18px] w-11 items-center justify-center rounded-b-[4px] border border-t-0 border-[#888]">
          <svg viewBox="0 0 10 10" className="h-[9px] w-[9px]" stroke="#f0f0f0" strokeWidth="2.500"><path d="M1 1l8 8M9 1L1 9" /></svg>
        </button>
      </div>
      <div className="flex flex-col border border-[#999] bg-[#f0f0f0] pr-[13px] pl-[18px]">
        <p className="mt-8 mb-1 pl-1 leading-4">Preview of: 123</p>
        <div className="flex justify-between">
          <div className="flex flex-col">
            <DimPreview className="h-[177px] w-[206px]" />
            <Group title="Description" className="mt-[6px] h-[61px] w-[206px]" />
          </div>
          <div className="flex flex-col gap-[10px]">
            <PushButton className="w-[69px]">Set C<u>u</u>rrent</PushButton>
            <PushButton className="w-[69px]"><u>N</u>ew...</PushButton>
            <PushButton className="w-[69px]"><u>M</u>odify...</PushButton>
            <PushButton className="w-[69px]"><u>O</u>verride...</PushButton>
            <PushButton className="w-[69px]"><u>C</u>ompare...</PushButton>
          </div>
        </div>
        <div className="mt-[10px] mb-[12px] flex justify-end gap-3">
          <PushButton>Close</PushButton>
          <PushButton className="w-[69px]"><u>H</u>elp</PushButton>
        </div>
      </div>
    </section>
  );
}

function DialogTabs() {
  const tabs: [string, string][] = [
    ["Lines", "w-[39px]"],
    ["Symbols and Arrows", "w-[98px]"],
    ["Text", "w-[39px]"],
    ["Fit", "w-[41px]"],
    ["Primary Units", "w-[66px]"],
    ["Alternate Units", "w-[74px]"],
    ["Tolerances", "w-[57px]"],
  ];
  return (
    <div role="tablist" className="flex items-end pl-0.5">
      {tabs.map(([name, width]) => (
        <button
          key={name}
          role="tab"
          aria-selected={name === "Fit"}
          className={clsx(
            "border border-b-0 border-l-0 border-[#999] pl-[3px] text-left first:border-l",
            width,
            name === "Fit" ? "z-10 -mb-px h-[23px] bg-white pl-[5px] leading-[18px]" : "h-5 bg-linear-to-b from-[#f4f4f4] to-[#e0e0e0] leading-5"
          )}
        >
          {name}
        </button>
      ))}
    </div>
  );
}

function NewStyleDialog() {
  return (
    <section
      role="dialog"
      aria-label="New Dimension Style"
      className={clsx(
        "absolute top-[70px] left-[75px] w-[541px] rounded-[6px] border border-[#3a3a3a] bg-[linear-gradient(180deg,#8e8e8e_0,#7b7b7b_28px,#c4c4c4_140px,#777_148px,#222_160px,#2a2a2a_100%)] px-1 pb-1 text-[#1a1a1a] shadow-[inset_0_0_0_1px_#a8a8a8,4px_2px_12px_#000000b0]",
        UI_FONT
      )}
    >
      <div className="mt-px flex h-[25px] items-center bg-linear-to-r from-[#b5b5b5] via-[#888] via-55% to-[#747474] font-['Open_Sans',sans-serif] text-[11px]">
        <svg viewBox="0 0 14 14" className="h-[15px] w-[15px]">
          <path d="M0 0h14v14H0z" fill="#e9c4bd" />
          <path d="M6 1h2l5 11-4-1-2-4-2 3 2 2-6 1z" fill="#c52a1a" />
        </svg>
        <h1 className="ml-[5px]">New Dimension Style: Mr.tran100</h1>
        <button aria-label="Close" className="ml-auto flex h-[18px] w-11 items-center justify-center self-start rounded-b-[4px] border border-t-0 border-[#5a2018] bg-linear-to-b from-[#e0a398] via-[#c8412b] via-50% to-[#d9674c]">
          <svg viewBox="0 0 10 10" className="h-[9px] w-[9px]" stroke="#fff" strokeWidth="2.500"><path d="M1 1l8 8M9 1L1 9" /></svg>
        </button>
      </div>
      <div className="border border-[#777] bg-[#f0f0f0] px-1.5 pt-[10px] pb-[11px]">
        <DialogTabs />
        <div className="flex h-[412px] gap-[7px] border border-[#999] bg-white pt-[3px] pr-2 pl-[9px]">
          <div className="flex flex-1 flex-col">
            <Group title={<><u>F</u>it options</>} className="h-[230px]">
              <p className="mt-[8px] ml-[2px] leading-[13px]">
                If there isn't enough room to place both text and
                <br />
                arrows inside extension lines, the first thing to
                <br />
                move outside the extension lines is:
              </p>
              <div className="mt-[10px] flex flex-col">
                <Radio name="fit" className="h-[22px]">Either text or arrows (best fit)</Radio>
                <Radio name="fit" className="h-[22px]">Arrows</Radio>
                <Radio name="fit" className="h-[22px]">Text</Radio>
                <Radio name="fit" className="h-[22px]">Both text and arrows</Radio>
                <Radio name="fit" className="h-[22px]" checked>
                  <span className="leading-[13px] outline-1 outline-dotted outline-[#333]">Always keep text between ext lines</span>
                </Radio>
              </div>
              <Check className="mt-[8px] leading-[15px]">
                Suppress arrows if they don't fit inside
                <br />
                extension lines
              </Check>
            </Group>
            <Group title="Text placement" className="mt-[6px] h-[104px]">
              <p className="mt-[5px] mb-0.5 leading-4">When text is not in the default position, place it:</p>
              <Radio name="placement" className="h-5"><span><u>B</u>eside the dimension line</span></Radio>
              <Radio name="placement" className="h-5"><span>Over dimension line, with <u>l</u>eader</span></Radio>
              <Radio name="placement" className="h-5" checked><span>Over dimension line, with<u>o</u>ut leader</span></Radio>
            </Group>
          </div>
          <div className="flex w-[238px] flex-col">
            <DimPreview className="mt-[7px] h-[165px] w-full border-t border-l border-[#888]" />
            <Group title="Scale for dimension features" className="mt-[7px] h-[92px]">
              <Check className="mt-[7px] ml-[5px] items-center leading-[15px]"><u>A</u>nnotative</Check>
              <Radio name="scale" className="mt-[5px] ml-[19px] h-[22px]">Scale dimensions to layout</Radio>
              <div className="flex items-center">
                <Radio name="scale" className="ml-[19px] h-[22px] w-[143px]" checked><span>Use overall <u>s</u>cale of:</span></Radio>
                <div className="flex h-[22px] w-[64px] border border-[#c8c8c8]">
                  <input aria-label="Overall scale" defaultValue="50" className="w-0 flex-1 px-0.5 outline-none" />
                  <div className="flex w-[15px] flex-col">
                    <button aria-label="Increase" className="flex flex-1 items-center justify-center border border-[#bbb] bg-[#ececec]"><Caret className="rotate-180 scale-75 text-[#555]" /></button>
                    <button aria-label="Decrease" className="flex flex-1 items-center justify-center border border-[#bbb] bg-[#ececec]"><Caret className="scale-75 text-[#555]" /></button>
                  </div>
                </div>
              </div>
            </Group>
            <Group title={<>Fine <u>t</u>uning</>} className="mt-[3px] h-[66px]">
              <Check className="mt-[7px] ml-[2px] items-center leading-[15px]"><u>P</u>lace text manually</Check>
              <Check checked className="mt-[9px] ml-[2px] items-center leading-[15px]"><u>D</u>raw dim line between ext lines</Check>
            </Group>
          </div>
        </div>
        <div className="mt-[10px] flex justify-end gap-[22px] pr-px">
          <PushButton primary>OK</PushButton>
          <PushButton>Cancel</PushButton>
          <PushButton><u>H</u>elp</PushButton>
        </div>
      </div>
    </section>
  );
}

export default function App() {
  return (
    <div className="relative flex h-screen flex-col overflow-hidden bg-[#696969] font-['Open_Sans','Noto_Sans',sans-serif] text-[11px] leading-4 whitespace-nowrap">
      <header className="flex shrink-0">
        <AppButton />
        <div className="min-w-0 flex-1">
          <TitleBar />
          <MenuBar />
        </div>
      </header>
      <div className="shrink-0">
        <FileTabs />
        <Toolbars />
      </div>
      <main className="flex min-h-0 flex-1 pb-px">
        <PropertiesPalette />
        <div className="flex min-w-0 flex-1 flex-col pl-0.5">
          <div className="flex min-h-0 flex-1 gap-[7px] overflow-hidden pr-px">
            <ToolColumn items={drawTools} className="h-[440px]" />
            <ModelSpace />
            <ToolColumn items={dimTools} className="h-[493px]" />
          </div>
          <CommandWindow />
        </div>
      </main>
      <StatusBar />
      <StyleManagerDialog />
      <NewStyleDialog />
    </div>
  );
}
